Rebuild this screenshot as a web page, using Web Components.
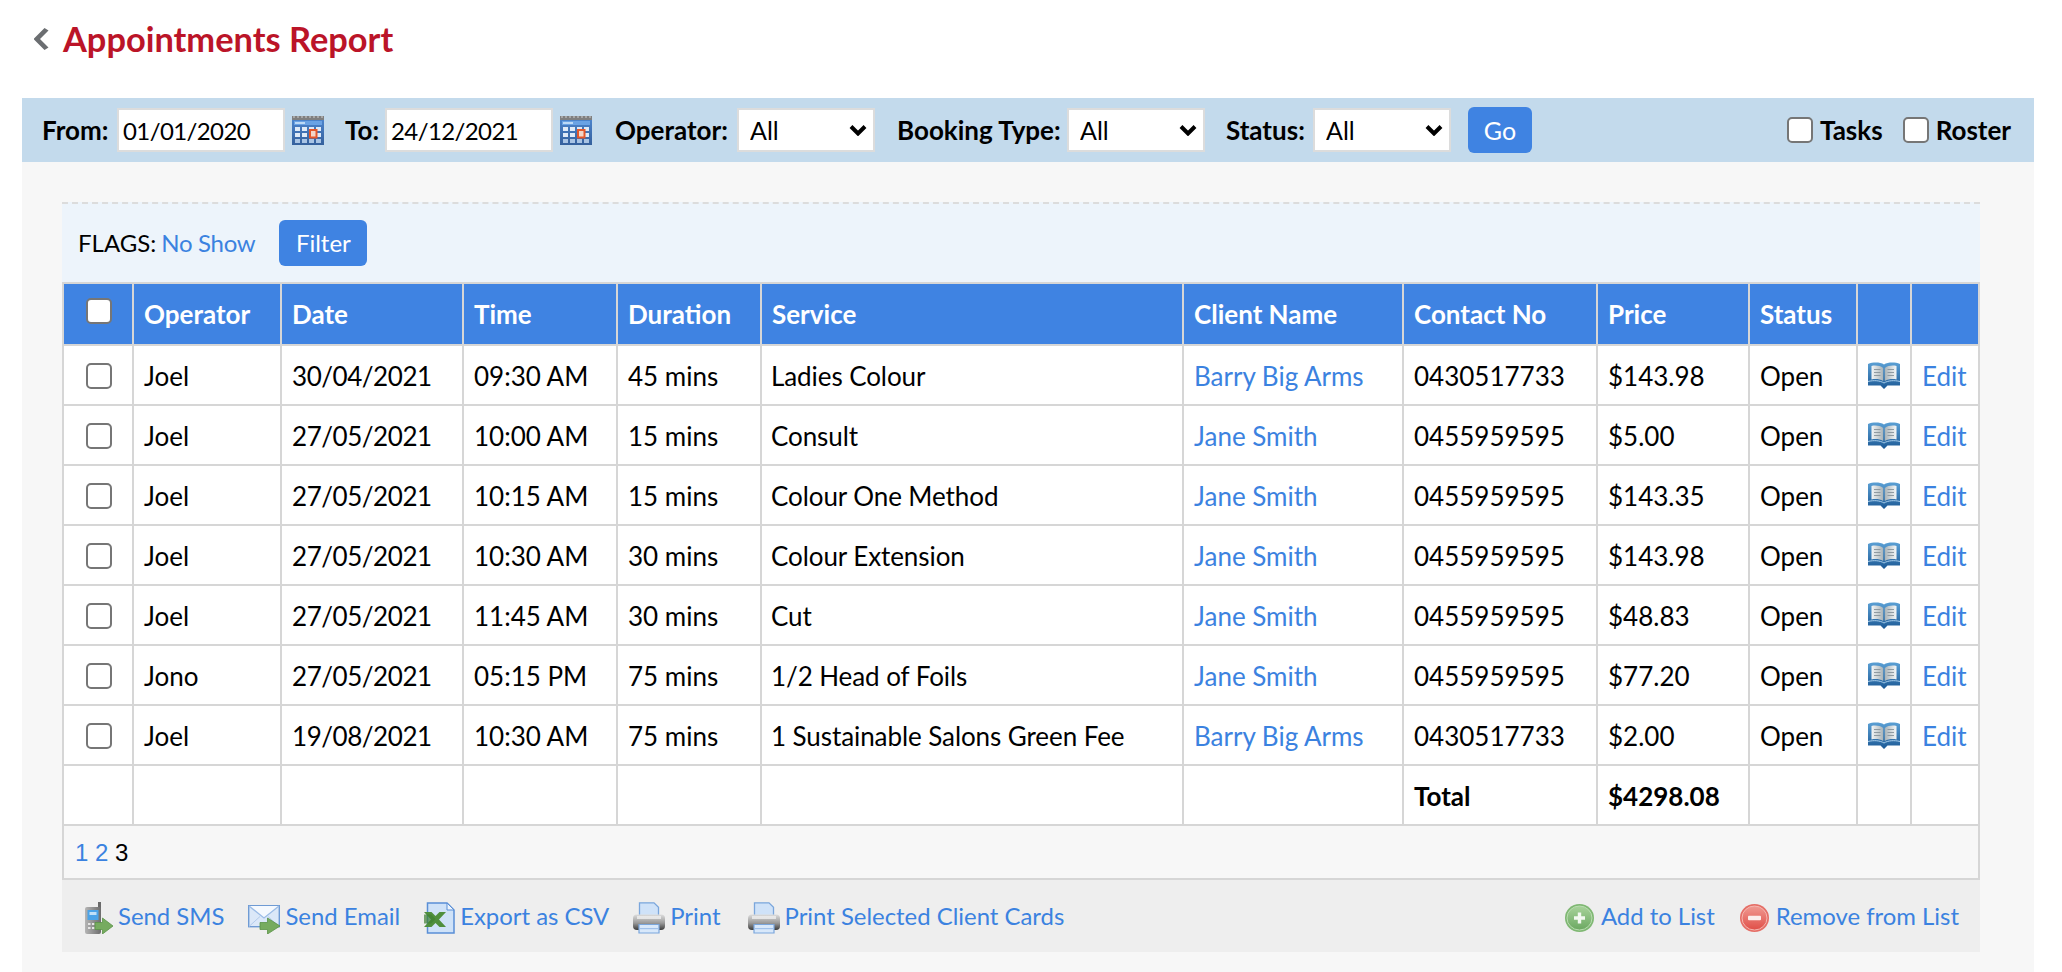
<!DOCTYPE html>
<html lang="en"><head><meta charset="utf-8"><title>Appointments Report</title>
<style>
html,body{margin:0;padding:0;background:#fff;}
body{font-family:Lato,"Noto Sans",sans-serif;font-size:24px;color:#000;}
</style></head>
<body>
<report-page>
  <report-heading>Appointments Report</report-heading>
  <report-filters></report-filters>
  <report-panel>
    <flags-bar></flags-bar>
    <report-table></report-table>
    <page-links></page-links>
    <action-toolbar></action-toolbar>
  </report-panel>
</report-page>
<script>
const CHECK=`appearance:none;-webkit-appearance:none;box-sizing:border-box;width:26px;height:26px;margin:0;background:#fff;border:2.6px solid #767676;border-radius:5px;`;
const ICONS={
cal:`<svg width="32" height="30" viewBox="0 0 32 30" style="filter:blur(.35px)"><defs><linearGradient id="g" x1="0" y1="0" x2="0" y2="1"><stop offset="0" stop-color="#4d86cf"/><stop offset="1" stop-color="#35609c"/></linearGradient></defs><rect y="3" width="32" height="27" fill="url(#g)"/><rect y="1" width="32" height="4" fill="#7f7f7f"/><path d="M1 2h30" stroke="#d0d0d0" stroke-width="1.2" stroke-dasharray="2 2"/><rect x="2" y="6" width="28" height="4" fill="#6aa2e4"/><rect x="3" y="7" width="10" height="2" fill="#bcd9f6"/><g fill="#dfeaf7"><rect x="3" y="12" width="5" height="4"/><rect x="10" y="12" width="5" height="4"/><rect x="17" y="12" width="5" height="4"/><rect x="24" y="12" width="5" height="4"/><rect x="3" y="18" width="5" height="4"/><rect x="10" y="18" width="5" height="4"/><rect x="24" y="18" width="5" height="4"/></g><g fill="#a9c4e4"><rect x="3" y="24" width="5" height="4"/><rect x="10" y="24" width="5" height="4"/><rect x="17" y="24" width="5" height="4"/><rect x="24" y="24" width="5" height="4"/></g><rect x="18" y="15" width="6.5" height="7.5" fill="#f3d6c8" stroke="#e4572a" stroke-width="2"/></svg>`,
book:`<svg width="32" height="27" viewBox="0 0 32 27" style="filter:blur(.4px)"><defs><linearGradient id="g" x1="0" y1="0" x2="0" y2="1"><stop offset="0" stop-color="#5a9fd4"/><stop offset="1" stop-color="#1d5a96"/></linearGradient><linearGradient id="l" x1="0" y1="0" x2="1" y2="0"><stop offset="0" stop-color="#f2f5f6"/><stop offset="1" stop-color="#a9b3b8"/></linearGradient><linearGradient id="m" x1="0" y1="0" x2="1" y2="0"><stop offset="0" stop-color="#a9b3b8"/><stop offset="1" stop-color="#f4f7f8"/></linearGradient></defs><path d="M0 2C5 0 12 0 16 2.500 20 0 27 0 32 2V23.500H19.500L16 27l-3.500-3.500H0Z" fill="url(#g)"/><path d="M3.500 4C7 3 12 3.500 15.200 6V19C12 17 7 16.500 3.500 17.500Z" fill="url(#l)"/><path d="M28.500 4C25 3 20 3.500 16.800 6V19c3.200-2 8.200-2.500 11.700-1.500Z" fill="url(#m)"/><path d="M6 7.500h6.500M6 10.500h6.500M6 13.500h6.500M19.500 7.500h6.500M19.500 10.500h6.500M19.500 13.500h6.500" stroke="#8f9aa1" stroke-width="1.200"/><path d="M0 19.500C6 18 12 18.500 16 21c4-2.500 10-3 16-1.500" fill="none" stroke="#a8cdea" stroke-width="1"/></svg>`,
sms:`<svg width="29" height="32" viewBox="0 0 29 32" style="filter:blur(.3px)"><defs><linearGradient id="p" x1="0" y1="0" x2="1" y2="0"><stop offset="0" stop-color="#b5b5b5"/><stop offset="1" stop-color="#6d6d6d"/></linearGradient></defs><rect x="14" y="0" width="3" height="7" fill="#6a6a6a"/><rect x="1" y="5" width="16" height="27" rx="2" fill="url(#p)"/><rect x="3.500" y="8" width="11" height="10" fill="#4aa3e8"/><rect x="5.500" y="10" width="7" height="3" fill="#bfe0f8"/><g fill="#e4e4e4"><rect x="4" y="21" width="2.500" height="2"/><rect x="8" y="21" width="2.500" height="2"/><rect x="4" y="25" width="2.500" height="2"/><rect x="8" y="25" width="2.500" height="2"/></g><path d="M11 20.500h7.500V16L29 24l-10.500 8v-4.500H11Z" fill="#76ab5f" stroke="#5b9347" stroke-width=".8"/></svg>`,
mail:`<svg width="32" height="29" viewBox="0 0 32 29" style="filter:blur(.3px);margin-top:3px"><rect x=".7" y=".7" width="30.600" height="21" fill="#dbe8f8" stroke="#6f9bd4" stroke-width="1.400"/><path d="M1 1l15 12L31 1" fill="#f5f9fe" stroke="#9bbce6" stroke-width="1.300"/><path d="M1 21.500l11-10M31 21.500l-11-10" stroke="#b3cbeb" stroke-width="1"/><path d="M12 17.500h7.500V13L32 21l-12.500 8v-4.500H12Z" fill="#76ab5f" stroke="#5b9347" stroke-width=".8"/></svg>`,
csv:`<svg width="31" height="32" viewBox="0 0 31 32" style="filter:blur(.3px)"><path d="M3.500 1H23l7 7v23H3.500Z" fill="#cfe2f8" stroke="#5a8fd6" stroke-width="1.500"/><path d="M23 1v7h7Z" fill="#eef5fd" stroke="#5a8fd6" stroke-width="1"/><path d="M0 10h7.500l4 4 4-4H22l-7 7.500 7 7.500h-6.500l-4-4-4 4H0l7-7.500Z" fill="#4f8f3d"/><path d="M0 12.500h7l4.500 4.500L7 21.500H0Z" fill="#3f8032" opacity=".7"/></svg>`,
print:`<svg width="32" height="32" viewBox="0 0 32 32" style="filter:blur(.35px)"><defs><linearGradient id="b" x1="0" y1="0" x2="0" y2="1"><stop offset="0" stop-color="#dcdcdc"/><stop offset=".55" stop-color="#9a9a9a"/><stop offset="1" stop-color="#3c3c3c"/></linearGradient></defs><path d="M6.500 .8H21l4.500 4.500V15h-19Z" fill="#cfe2f8" stroke="#7aa6dc" stroke-width="1.300"/><rect x="0" y="12.500" width="32" height="15.500" rx="4" fill="url(#b)"/><rect x="4" y="14" width="24" height="3" fill="#efefef" opacity=".8"/><path d="M6 22.500h20V31H6Z" fill="#d8e8fa" stroke="#7aa6dc" stroke-width="1.200"/><rect x="7" y="26" width="18" height="1.200" fill="#9fc0ea"/></svg>`,
add:`<svg width="29" height="28" viewBox="0 0 29 28" style="filter:blur(.25px)"><defs><linearGradient id="a" x1="0" y1="0" x2="0" y2="1"><stop offset="0" stop-color="#a8d39b"/><stop offset="1" stop-color="#6ba861"/></linearGradient></defs><ellipse cx="14.500" cy="14" rx="14.500" ry="14" fill="#7fb873"/><ellipse cx="14.500" cy="14" rx="12.500" ry="12" fill="url(#a)" stroke="#b9dcb0" stroke-width="1"/><path d="M12.800 8.500h3.400v3.800H20v3.400h-3.800v3.800h-3.400v-3.800H9v-3.400h3.800Z" fill="#f2f8f0"/></svg>`,
remove:`<svg width="29" height="28" viewBox="0 0 29 28" style="filter:blur(.25px)"><defs><linearGradient id="a" x1="0" y1="0" x2="0" y2="1"><stop offset="0" stop-color="#f09a92"/><stop offset="1" stop-color="#e04f48"/></linearGradient></defs><ellipse cx="14.500" cy="14" rx="14.500" ry="14" fill="#e56e66"/><ellipse cx="14.500" cy="14" rx="12.500" ry="12" fill="url(#a)" stroke="#f5b6b0" stroke-width="1"/><rect x="8" y="11.800" width="13" height="4.400" rx="1" fill="#fbeeec"/></svg>`
};
function def(name,html,setup){
  customElements.define(name,class extends HTMLElement{
    constructor(){super();this.attachShadow({mode:'open'}).innerHTML=typeof html==='function'?html(this):html;}
    connectedCallback(){if(setup&&!this._d){this._d=1;setup(this,this.shadowRoot);}}
  });
}
def('report-page',`<style>:host{display:block;width:2012px;margin-left:22px;}</style><slot></slot>`);
def('report-heading',`<style>
:host{display:flex;align-items:center;height:98px;box-sizing:border-box;padding:0 0 21px 11px;gap:14px;color:#bb1428;font-size:34.4px;font-weight:700;}
svg{display:block;}
</style><svg width="16" height="22" viewBox="0 0 16 22"><path d="M11.500 0L15.500 2.500 7 11l8.500 8.500L11.500 22 1 11.500V10.500Z" fill="#6b6e71"/></svg><slot></slot>`);
def('date-field',`<style>
:host{display:flex;align-items:center;gap:7px;}
input{box-sizing:border-box;width:168px;height:44px;margin:0;border:2px solid #dcdcdc;background:#fff;padding:0 0 0 4px;font:inherit;font-size:24px;letter-spacing:-.6px;color:#000;border-radius:0;outline:none;}
span{display:block;} svg{display:block;}
</style><input type="text"><span id="i"></span>`,(h,s)=>{const i=s.querySelector('input');i.value=h.getAttribute('value');i.setAttribute('value',h.getAttribute('value'));s.getElementById('i').innerHTML=ICONS.cal;});
def('filter-select',`<style>
:host{display:block;position:relative;width:138px;height:44px;}
select{appearance:none;-webkit-appearance:none;box-sizing:border-box;width:100%;height:100%;margin:0;border:2px solid #dcdcdc;border-radius:0;background:#fff;padding:0 0 0 11px;font:inherit;font-size:25px;color:#000;outline:none;}
svg{position:absolute;right:8px;top:16px;pointer-events:none;}
</style><select><option>All</option></select><svg width="18" height="12" viewBox="0 0 18 12"><path d="M2 2.500l7 7 7-7" fill="none" stroke="#000" stroke-width="4"/></svg>`);
def('toggle-check',`<style>
:host{display:flex;align-items:center;gap:7px;font-weight:700;font-size:26px;}
input{${CHECK}}
</style><input type="checkbox"><slot></slot>`);
def('blue-button',`<style>
:host{display:flex;align-items:center;justify-content:center;box-sizing:border-box;padding-bottom:1px;background:#3f83e2;color:#fff;border-radius:6px;font-size:var(--btn-size,24px);}
</style><slot></slot>`);
def('report-filters',`<style>
:host{display:flex;align-items:center;box-sizing:border-box;height:64px;padding:0 23px 0 20px;background:#c3daec;font-size:26px;}
b{font-weight:700;white-space:nowrap;display:block;}
.r{margin-left:auto;display:flex;gap:20px;}
blue-button{width:64px;height:46px;margin-left:17px;--btn-size:25px;}
</style>
<b style="width:75px">From:</b><date-field value="01/01/2020"></date-field>
<b style="width:40px;margin-left:21px">To:</b><date-field value="24/12/2021"></date-field>
<b style="width:122px;margin-left:23px">Operator:</b><filter-select></filter-select>
<b style="width:170px;margin-left:22px">Booking Type:</b><filter-select></filter-select>
<b style="width:87px;margin-left:21px">Status:</b><filter-select></filter-select>
<blue-button>Go</blue-button>
<div class="r"><toggle-check>Tasks</toggle-check><toggle-check>Roster</toggle-check></div>`);
def('report-panel',`<style>:host{display:block;background:#f7f7f7;padding:40px 54px 20px 40px;width:2012px;box-sizing:border-box;}</style><slot></slot>`);
def('flags-bar',`<style>
:host{display:flex;align-items:center;box-sizing:border-box;height:80px;padding:0 0 0 16px;background:#edf4fb;border-top:2px dashed #dcdcdc;font-size:24px;}
span,a{padding-bottom:2px;}
a{color:#3b82e0;text-decoration:none;margin-left:5px;letter-spacing:-.3px;}
blue-button{width:88px;height:46px;margin-left:24px;}
</style><span>FLAGS:</span><a href="#">No Show</a><blue-button>Filter</blue-button>`);
const ROWS=[
['Joel','30/04/2021','09:30 AM','45 mins','Ladies Colour','Barry Big Arms','0430517733','$143.98'],
['Joel','27/05/2021','10:00 AM','15 mins','Consult','Jane Smith','0455959595','$5.00'],
['Joel','27/05/2021','10:15 AM','15 mins','Colour One Method','Jane Smith','0455959595','$143.35'],
['Joel','27/05/2021','10:30 AM','30 mins','Colour Extension','Jane Smith','0455959595','$143.98'],
['Joel','27/05/2021','11:45 AM','30 mins','Cut','Jane Smith','0455959595','$48.83'],
['Jono','27/05/2021','05:15 PM','75 mins','1/2 Head of Foils','Jane Smith','0455959595','$77.20'],
['Joel','19/08/2021','10:30 AM','75 mins','1 Sustainable Salons Green Fee','Barry Big Arms','0430517733','$2.00']];
const COLS=[70,148,182,154,144,422,220,194,152,108,54,68];
def('report-table',()=>`<style>
:host{display:block;font-size:26px;}
table{border-collapse:separate;border-spacing:0;table-layout:fixed;width:1918px;border-right:2px solid #d6d6d6;border-bottom:2px solid #d6d6d6;background:#fff;}
th,td{box-sizing:border-box;height:60px;padding:0 0 0 10px;border-left:2px solid #d6d6d6;border-top:2px solid #d6d6d6;text-align:left;white-space:nowrap;}
td{padding-top:2px;}
thead th{height:62px;background:#3f83e2;color:#fff;font-weight:700;}
thead th:first-child input{position:relative;top:-4px;}
td.c,th.c{padding:0 0 4px 2px;text-align:center;}
td.i{padding:6px 0 0 0;text-align:center;}
td.i svg{display:inline-block;}
td.d{letter-spacing:-.45px;}
td.s{padding-left:9px;letter-spacing:-.08px;}
input{${CHECK}vertical-align:middle;}
a{color:#3b82e0;text-decoration:none;}
b{font-weight:700;}
</style><table><colgroup>${COLS.map(w=>`<col style="width:${w}px">`).join('')}</colgroup>
<thead><tr><th class="c"><input type="checkbox"></th>${['Operator','Date','Time','Duration','Service','Client Name','Contact No','Price','Status','',''].map(t=>`<th>${t}</th>`).join('')}</tr></thead>
<tbody>${ROWS.map(r=>`<tr><td class="c"><input type="checkbox"></td><td>${r[0]}</td><td class="d">${r[1]}</td><td>${r[2]}</td><td>${r[3]}</td><td class="s">${r[4]}</td><td><a href="#">${r[5]}</a></td><td>${r[6]}</td><td>${r[7]}</td><td>Open</td><td class="i">${ICONS.book}</td><td><a href="#">Edit</a></td></tr>`).join('')}
<tr><td></td><td></td><td></td><td></td><td></td><td></td><td></td><td><b>Total</b></td><td><b>$4298.08</b></td><td></td><td></td><td></td></tr></tbody></table>`);
def('page-links',`<style>
:host{display:flex;align-items:center;box-sizing:border-box;height:54px;padding:2px 0 0 11px;border:2px solid #d6d6d6;border-top:0;font-family:"Liberation Sans",Arial,sans-serif;font-size:24px;}
a{color:#3b82e0;text-decoration:none;}
span{white-space:pre;}
</style><a href="#">1</a><span> </span><a href="#">2</a><span> 3</span>`);
def('action-link',(h)=>`<style>
:host{display:flex;align-items:center;gap:${h.getAttribute('gap')||5}px;color:#3b82e0;font-size:23.9px;white-space:nowrap;margin-top:-2px;}
span{display:flex;align-items:center;height:32px;margin:3px 0 -3px;}
svg{display:block;}
</style><span>${ICONS[h.getAttribute('icon')]}</span><slot></slot>`);
def('action-toolbar',`<style>
:host{display:flex;align-items:center;box-sizing:border-box;height:72px;padding:0 21px 0 22px;gap:24px;background:#eeeeee;}
.r{margin-left:auto;display:flex;gap:25px;}
</style>
<action-link icon="sms">Send SMS</action-link>
<action-link icon="mail">Send Email</action-link>
<action-link icon="csv">Export as CSV</action-link>
<action-link icon="print">Print</action-link>
<action-link icon="print" style="margin-left:3px">Print Selected Client Cards</action-link>
<div class="r"><action-link icon="add" gap="7">Add to List</action-link><action-link icon="remove" gap="7">Remove from List</action-link></div>`);
</script>
</body></html>
